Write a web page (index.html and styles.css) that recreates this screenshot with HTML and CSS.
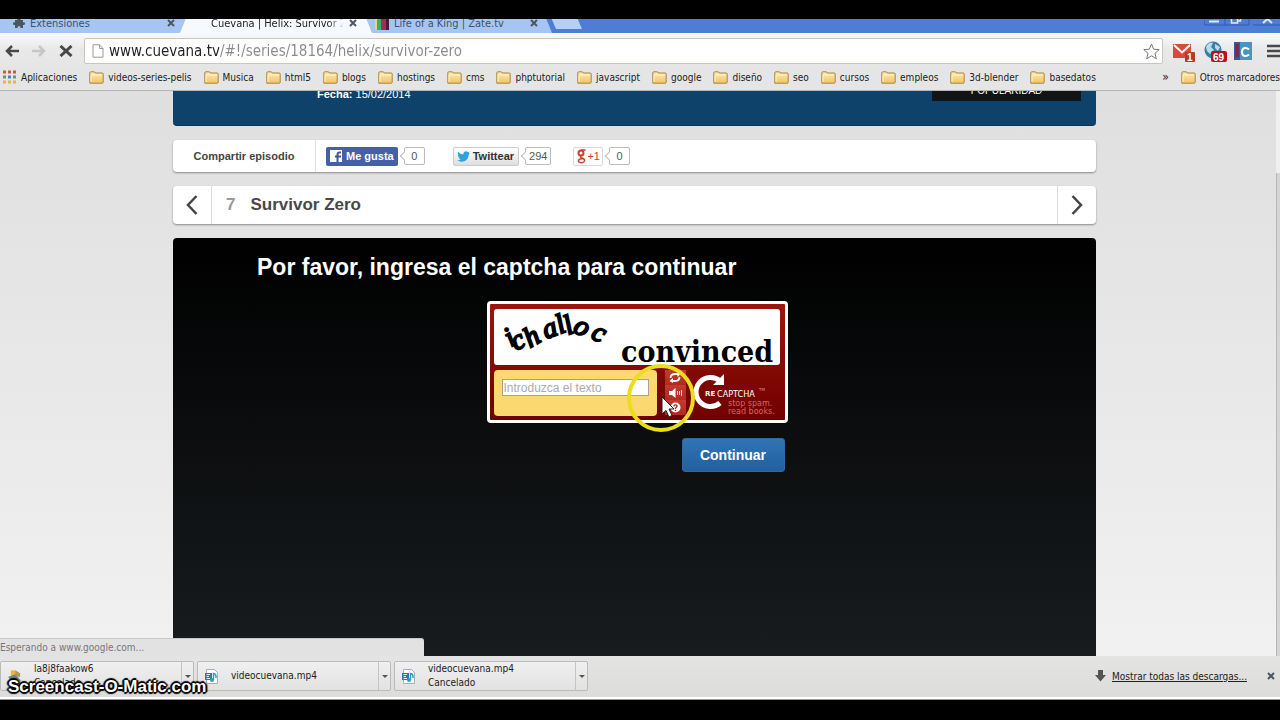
FILE: index.html
```html
<!DOCTYPE html>
<html lang="es">
<head>
  <meta charset="UTF-8">
  <meta name="viewport" content="width=device-width, initial-scale=1.0">
  <title>Cuevana | Helix: Survivor Zero</title>
  <link rel="stylesheet" href="styles.css">
</head>
<body>
  <svg width="0" height="0" class="defs" aria-hidden="true">
    <defs>
      <linearGradient id="fold" x1="0" y1="0" x2="0" y2="1">
        <stop offset="0" stop-color="#fdeab0"/><stop offset="1" stop-color="#f3c565"/>
      </linearGradient>
      <symbol id="folder" viewBox="0 0 15 13">
        <path d="M.8 12.2V1.8Q.8.8 1.8.8H5Q6 .8 6.3 2H13Q14.2 2 14.2 3V11.2Q14.2 12.2 13.2 12.2Z" fill="url(#fold)" stroke="#a8843e"/>
        <path d="M2 11V4H13" fill="none" stroke="#fff3cc"/>
      </symbol>
      <symbol id="media" viewBox="0 0 14 15">
        <path d="M1.5.5H9.5L12.5 3.5V14.5H1.5Z" fill="#fff" stroke="#9db2c4"/>
        <path d="M0 4H7V11H0Z" fill="#2f78a8"/>
        <path d="M1.5 5.5H5M1.5 7.5H4M1.5 9.5H5" stroke="#d8f0fa"/>
        <path d="M8.5 11V4.5Q11.5 5 11 9" fill="none" stroke="#2b9cc0" stroke-width="1.5"/>
        <circle cx="7" cy="11" r="2" fill="#2b9cc0"/>
      </symbol>
    </defs>
  </svg>

  <!-- Pestañas -->
  <div class="tabs">
    <div class="tab tab-first">
      <svg width="12" height="12" viewBox="0 0 12 12"><path d="M2 3H4.5Q3.5 0 6 0T7.5 3H10V5.5Q12 4.5 12 6.5T10 8V11H7.5Q7.5 9 6 9T4.5 11H2V8Q0 8.5 0 6.5T2 5.5Z" fill="#4a5666"/></svg>
      <span class="tab-title">Extensiones</span>
      <button class="tab-close" aria-label="Cerrar"><svg width="8" height="8" viewBox="0 0 8 8"><path d="M1 1L7 7M7 1L1 7"/></svg></button>
    </div>
    <div class="tab tab-active">
      <span class="tab-title fade">Cuevana | Helix: Survivor Zero</span>
      <button class="tab-close" aria-label="Cerrar"><svg width="8" height="8" viewBox="0 0 8 8"><path d="M1 1L7 7M7 1L1 7"/></svg></button>
    </div>
    <div class="tab tab-last">
      <span class="bars"></span>
      <span class="tab-title">Life of a King | Zate.tv</span>
      <button class="tab-close" aria-label="Cerrar"><svg width="8" height="8" viewBox="0 0 8 8"><path d="M1 1L7 7M7 1L1 7"/></svg></button>
    </div>
    <button class="new-tab" aria-label="Nueva"></button>
    <svg class="win" width="76" height="8" viewBox="0 0 76 8">
      <path d="M0 0V4Q0 6 2 6H16Q19 6 21 6V0M21 6H45V0M49 6H76" fill="none" stroke="#2c5cb4"/>
      <path d="M5 2.5H15" stroke="#dfe9fb" stroke-width="2"/>
      <path d="M27.5 0V4H33.5V0M34 2H36.5V0" fill="none" stroke="#dfe9fb" stroke-width="1.5"/>
      <path d="M59 4L63.5 0L68 4" fill="none" stroke="#dfe9fb" stroke-width="2"/>
    </svg>
  </div>

  <!-- Barra de direcciones -->
  <div class="toolbar">
    <button class="nav" aria-label="Atrás"><svg width="14" height="12" viewBox="0 0 14 12"><path d="M7 1L2 6L7 11M2 6H14" fill="none" stroke="#484848" stroke-width="2.5"/></svg></button>
    <button class="nav" aria-label="Adelante"><svg width="14" height="12" viewBox="0 0 14 12"><path d="M7 1L12 6L7 11M12 6H0" fill="none" stroke="#c6c6c6" stroke-width="2.5"/></svg></button>
    <button class="nav" aria-label="Detener"><svg width="14" height="12" viewBox="0 0 14 12"><path d="M1.5 1L12.5 11M12.5 1L1.5 11" fill="none" stroke="#484848" stroke-width="3"/></svg></button>
    <div class="omnibox">
      <svg width="12" height="14" viewBox="0 0 12 14"><path d="M1 .8H7.5L11 4.5V13.2H1ZM7.5 .8V4.5H11" fill="#fff" stroke="#999"/></svg>
      <input class="url" type="text" aria-label="Dirección" value="www.cuevana.tv/#!/series/18164/helix/survivor-zero">
      <svg width="17" height="17" viewBox="0 0 17 17"><path d="M8.5 1L10.7 6.2L16.2 6.6L12 10.3L13.3 15.8L8.5 12.8L3.7 15.8L5 10.3L.8 6.6L6.3 6.2Z" fill="#fff" stroke="#777"/></svg>
    </div>
    <div class="exts">
      <svg width="24" height="21" viewBox="0 0 24 21"><path d="M1 3H19V17H1Z" fill="#d8483c"/><path d="M2 4L10 11.5L18 4" fill="none" stroke="#fff" stroke-width="2"/><rect x="13" y="11" width="10" height="10" rx="1" fill="#b8382c"/><text x="15" y="20" class="badge">1</text></svg>
      <svg width="24" height="21" viewBox="0 0 24 21"><circle cx="10" cy="9" r="8.5" fill="#3d7ea6"/><path d="M3 6Q6 0 10 2L8 6L11 9L7 13L4 10ZM12 3L17 6L15 10L12 7Z" fill="#b9dceb"/><rect x="8" y="10" width="16" height="11" rx="2" fill="#b3141c"/><text x="10" y="20" class="badge">69</text></svg>
      <svg width="18" height="18" viewBox="0 0 18 18"><path d="M0 0H18V18H0Z" fill="#4a94bd"/><path d="M0 0H6V18H0Z" fill="#35579b"/><path d="M3 2V15" stroke="#8b1f3d" stroke-width="3"/><path d="M15 7.5Q13.5 6 11.5 6Q8 6 8 10T11.5 14Q13.5 14 15 12.5" fill="none" stroke="#fff" stroke-width="2"/></svg>
      <svg class="menu" width="16" height="14" viewBox="0 0 16 14"><path d="M0 2H16M0 7H16M0 12H16" stroke="#484848" stroke-width="2.5"/></svg>
    </div>
  </div>

  <!-- Marcadores -->
  <nav class="bookmarks">
    <a class="mark apps" href="#"><svg width="14" height="14" viewBox="0 0 14 14"><path d="M0 2H3M5 2H8M10 2H13" stroke="#d0553f" stroke-width="3"/><path d="M0 7H3M10 7H13" stroke="#55a36b" stroke-width="3"/><path d="M5 7H8" stroke="#4a7fd0" stroke-width="3"/><path d="M0 12H3M5 12H8M10 12H13" stroke="#e5b54a" stroke-width="3"/></svg>Aplicaciones</a>
    <a class="mark" href="#"><svg width="15" height="13"><use href="#folder"/></svg>videos-series-pelis</a>
    <a class="mark" href="#"><svg width="15" height="13"><use href="#folder"/></svg>Musica</a>
    <a class="mark" href="#"><svg width="15" height="13"><use href="#folder"/></svg>html5</a>
    <a class="mark" href="#"><svg width="15" height="13"><use href="#folder"/></svg>blogs</a>
    <a class="mark" href="#"><svg width="15" height="13"><use href="#folder"/></svg>hostings</a>
    <a class="mark" href="#"><svg width="15" height="13"><use href="#folder"/></svg>cms</a>
    <a class="mark" href="#"><svg width="15" height="13"><use href="#folder"/></svg>phptutorial</a>
    <a class="mark" href="#"><svg width="15" height="13"><use href="#folder"/></svg>javascript</a>
    <a class="mark" href="#"><svg width="15" height="13"><use href="#folder"/></svg>google</a>
    <a class="mark" href="#"><svg width="15" height="13"><use href="#folder"/></svg>diseño</a>
    <a class="mark" href="#"><svg width="15" height="13"><use href="#folder"/></svg>seo</a>
    <a class="mark" href="#"><svg width="15" height="13"><use href="#folder"/></svg>cursos</a>
    <a class="mark" href="#"><svg width="15" height="13"><use href="#folder"/></svg>empleos</a>
    <a class="mark" href="#"><svg width="15" height="13"><use href="#folder"/></svg>3d-blender</a>
    <a class="mark" href="#"><svg width="15" height="13"><use href="#folder"/></svg>basedatos</a>
    <span class="more">»</span>
    <a class="mark" href="#"><svg width="15" height="13"><use href="#folder"/></svg>Otros marcadores</a>
  </nav>

  <!-- Página -->
  <div class="view">
    <main class="page">
      <div class="content">
        <header class="hero">
          <p class="date"><b>Fecha:</b> 15/02/2014</p>
          <span class="popular">POPULARIDAD</span>
        </header>

        <section class="card share">
          <span class="share-label">Compartir episodio</span>
          <div class="social">
            <button class="fb"><svg width="12" height="12" viewBox="0 0 12 12"><path d="M0 0H12V12H0Z" fill="#fff"/><path d="M7.5 12V4.5Q7.5 2.5 9.5 2.5H11M5 6.5H11" fill="none" stroke="#3b5998" stroke-width="2"/></svg>Me gusta</button>
            <span class="count">0</span>
          </div>
          <div class="social">
            <button class="tw"><svg width="13" height="11" viewBox="0 0 13 11"><path d="M0 9.5Q2.5 9.5 3.8 8.3Q2 8 1.5 6.5H2.7Q.8 5.7.7 3.8L1.8 4.2Q.3 2.8 1 .8Q3.2 3.4 6.4 3.5Q6 .6 8.8.3Q10.2.3 11 1.2L12.7.6L11.6 2.2L13 1.9L11.8 3.2Q11.6 8 8 9.9Q4 11.6 0 9.5Z" fill="#2ba3dc"/></svg>Twittear</button>
            <span class="count">294</span>
          </div>
          <div class="social">
            <button class="gp"><svg width="9" height="15" viewBox="0 0 9 15"><circle cx="4" cy="4" r="2.5" fill="none" stroke="#c8402c" stroke-width="2"/><path d="M4 1H8.5M5 6Q2 8 5 9Q8 10 7.5 12Q6.5 14 4 13.7Q1 13.5 1.5 11.5Q2 9.8 5.5 9.8" fill="none" stroke="#c8402c" stroke-width="1.5"/></svg>+1</button>
            <span class="count">0</span>
          </div>
        </section>

        <section class="card episode">
          <button class="arrow prev" aria-label="Anterior"><svg width="12" height="20" viewBox="0 0 12 20"><path d="M10.5 1L2 10L10.5 19"/></svg></button>
          <h2 class="title"><span class="number">7</span>Survivor Zero</h2>
          <button class="arrow next" aria-label="Siguiente"><svg width="12" height="20" viewBox="0 0 12 20"><path d="M1.5 1L10 10L1.5 19"/></svg></button>
        </section>

        <section class="player">
          <h1>Por favor, ingresa el captcha para continuar</h1>
          <form class="captcha-form">
            <div class="captcha">
              <svg class="words" width="286" height="56" viewBox="0 0 286 56">
                <text class="warped" x="17 22 36 52 66 74 78 96" y="38 42 39 30 25 26 22 29" rotate="-32 -28 -30 -20 -22 -22 28 24">ichalloc</text>
                <text class="slab" x="127" y="53">convinced</text>
              </svg>
              <div class="captcha-row">
                <div class="answer"><input type="text" aria-label="Introduzca el texto" placeholder="Introduzca el texto"></div>
                <div class="tools">
                  <button type="button" aria-label="Otra imagen"><svg width="12" height="11" viewBox="0 0 12 11"><path d="M1.5 6Q1.5 2 6 2H9M10.5 5Q10.5 9 6 9H3" fill="none" stroke="#fff" stroke-width="1.8"/><path d="M8 0L11.5 2L8.5 5ZM4 6L.5 9L4 11Z" fill="#fff"/></svg></button>
                  <button type="button" aria-label="Audio"><svg width="13" height="10" viewBox="0 0 13 10"><path d="M0 3H3L6.5 0V10L3 7H0Z" fill="#fff"/><path d="M8.5 3V7M10.5 3V7M12.5 2V8" stroke="#fbd2cb"/></svg></button>
                  <button type="button" aria-label="Ayuda"><svg width="11" height="11" viewBox="0 0 11 11"><circle cx="5.5" cy="5.5" r="5" fill="#fff"/><path d="M4 4.5Q4 2.8 5.5 2.8T7 4.3Q7 5.2 5.5 6V7M5.5 7.8V9" fill="none" stroke="#b02418" stroke-width="1.3"/></svg></button>
                </div>
                <svg class="logo" width="88" height="46" viewBox="0 0 88 46">
                  <path d="M26 11A14.5 14.5 0 1 0 26 33" fill="none" stroke="#fff" stroke-width="5"/>
                  <path d="M19 15H30V4Z" fill="#fff"/>
                  <text x="11" y="26" class="re">RE</text>
                  <text x="23" y="27" class="cap">CAPTCHA</text>
                  <text x="65" y="21" class="tm">TM</text>
                  <text x="34" y="36" class="slogan">stop spam.</text>
                  <text x="34" y="44" class="slogan">read books.</text>
                </svg>
              </div>
              <svg class="pointer" width="68" height="70" viewBox="0 0 68 70">
                <circle cx="34" cy="35" r="32" fill="none" stroke="#eadd1c" stroke-width="4"/>
                <path d="M35 34V51L39 47.5L42 54L45 52.5L42 46H47Z" fill="#fff" stroke="#222"/>
              </svg>
            </div>
            <button type="button" class="send">Continuar</button>
          </form>
        </section>
      </div>
    </main>
    <div class="scroll"></div>
    <div class="status">Esperando a www.google.com...</div>
  </div>

  <!-- Descargas -->
  <footer class="shelf">
    <div class="download">
      <svg width="14" height="16" viewBox="0 0 15 16"><path d="M3 2H9V9H3Z" fill="#e8b535"/><path d="M0 9L8 6L14 13L6 15Z" fill="#6b8094"/><path d="M8 2L13 5V9L8 8Z" fill="#b09a45"/></svg>
      <div class="file"><span>la8j8faakow6</span><span>Cancelado</span></div>
      <button class="drop" aria-label="Opciones"></button>
    </div>
    <div class="download">
      <svg width="14" height="15"><use href="#media"/></svg>
      <div class="file"><span>videocuevana.mp4</span></div>
      <button class="drop" aria-label="Opciones"></button>
    </div>
    <div class="download">
      <svg width="14" height="15"><use href="#media"/></svg>
      <div class="file"><span>videocuevana.mp4</span><span>Cancelado</span></div>
      <button class="drop" aria-label="Opciones"></button>
    </div>
    <a class="all" href="#"><svg width="11" height="12" viewBox="0 0 11 12"><path d="M3 0H8V5H11L5.5 11.5L0 5H3Z" fill="#555"/></svg><span>Mostrar todas las descargas...</span></a>
    <button class="tab-close" aria-label="Cerrar"><svg width="8" height="8" viewBox="0 0 8 8"><path d="M1 1L7 7M7 1L1 7"/></svg></button>
    <div class="watermark">Screencast-O-Matic.com</div>
  </footer>
</body>
</html>
```
FILE: styles.css
```css
* {
  box-sizing: border-box;
}

body {
  margin: 0;
  padding: 19px 0 20px;
  height: 100vh;
  display: flex;
  flex-direction: column;
  overflow: hidden;
  background: #000;
  font-family: "DejaVu Sans Condensed", "Noto Sans", sans-serif;
  font-size: 10px;
  color: #222;
}

button {
  margin: 0;
  padding: 0;
  border: 0;
  background: none;
  font-family: inherit;
  cursor: pointer;
}

a {
  color: inherit;
  text-decoration: none;
}

svg {
  flex: none;
  display: block;
}

.defs {
  position: absolute;
}

/* Pestañas */
.tabs {
  flex: none;
  height: 14px;
  display: flex;
  align-items: flex-end;
  overflow: hidden;
  background: linear-gradient(#4a7ddb, #4f7fce);
}

.tab {
  height: 20px;
  display: flex;
  align-items: center;
  gap: 5px;
  background: #a5c6f2;
  color: #42506a;
  font-size: 11px;
  white-space: nowrap;
}

.tab-first {
  width: 188px;
  padding: 0 13px;
}

.tab-active {
  width: 192px;
  margin-left: -8px;
  padding: 0 15px 0 31px;
  background: #f6f9fd;
  color: #222;
  clip-path: polygon(8px 0, calc(100% - 8px) 0, 100% 100%, 0 100%);
  z-index: 1;
}

.tab-last {
  width: 190px;
  margin-left: -10px;
  padding: 0 14px 0 13px;
  clip-path: polygon(0 0, calc(100% - 8px) 0, 100% 100%, 0 100%);
}

.tab-title {
  flex: 1;
  overflow: hidden;
}

.fade {
  -webkit-mask-image: linear-gradient(90deg, #000 88%, transparent);
  mask-image: linear-gradient(90deg, #000 88%, transparent);
}

.tab-close svg {
  fill: none;
  stroke: #4c5563;
  stroke-width: 2;
}

.bars {
  width: 14px;
  height: 14px;
  background: linear-gradient(90deg, #d8e070 2px, #35b558 2px 6px, #a02c58 6px 11px, #4a1c38 11px);
}

.new-tab {
  width: 32px;
  height: 14px;
  margin: 0 0 4px -2px;
  background: #b4d0f6;
  clip-path: polygon(0 0, 26px 0, 100% 100%, 6px 100%);
}

.win {
  margin: 0 0 6px auto;
}

/* Barra de direcciones */
.toolbar {
  flex: none;
  height: 33px;
  padding: 5px 0 2px 5px;
  display: flex;
  align-items: center;
  background: linear-gradient(#f8fafd, #e9e9e9 16px, #e6e6e6);
}

.nav {
  width: 14px;
  margin-right: 13px;
}

.omnibox {
  flex: 1;
  height: 26px;
  margin-left: -2px;
  padding: 0 2px 0 7px;
  display: flex;
  align-items: center;
  gap: 5px;
  background: #fff;
  border: 1px solid #c9c6bd;
  border-radius: 2px;
}

.url {
  flex: 1;
  min-width: 0;
  padding: 0;
  border: 0;
  outline: 0;
  font-family: "DejaVu Sans Condensed", sans-serif;
  font-size: 15px;
  color: transparent;
  background: linear-gradient(90deg, #222 110px, #8a8a8a 110px);
  -webkit-background-clip: text;
  background-clip: text;
}

.exts {
  flex: none;
  width: 117px;
  padding-left: 9px;
  display: flex;
  align-items: center;
  gap: 7px;
  overflow: hidden;
}

.menu {
  margin-left: 8px;
}

.badge {
  font: bold 10px "Liberation Sans", sans-serif;
  fill: #fff;
}

/* Marcadores */
.bookmarks {
  flex: none;
  height: 25px;
  padding: 0 0 2px 3px;
  display: flex;
  align-items: center;
  gap: 12px;
  overflow: hidden;
  white-space: nowrap;
  background: #e5e5e5;
  border-bottom: 1px solid #b5b5b5;
}

.mark {
  display: flex;
  align-items: center;
  gap: 4px;
}

.more {
  margin-left: auto;
  font-size: 12px;
}

/* Página */
.view {
  flex: 1;
  min-height: 0;
  display: flex;
  position: relative;
  background: #f0f0f0;
}

.page {
  flex: 1;
  min-width: 0;
  padding-right: 7px;
  overflow: hidden;
  display: flex;
  justify-content: center;
  background: linear-gradient(#dfdfdf, #f1f1f1);
  font-family: "Liberation Sans", Arial, sans-serif;
}

.content {
  width: 923px;
  margin-top: -40px;
  display: flex;
  flex-direction: column;
}

.scroll {
  width: 4px;
  margin-top: 82px;
  background: #d5d5d5;
  border-left: 1px solid #b8b8b8;
}

.hero {
  flex: none;
  height: 75px;
  padding: 0 15px 24px 144px;
  display: flex;
  justify-content: space-between;
  align-items: flex-end;
  background: #0e426b;
  border-bottom: 1px solid #0a3355;
  border-radius: 0 0 4px 4px;
  color: #fff;
}

.date {
  margin: 0;
  font-size: 11px;
  line-height: 14px;
}

.popular {
  width: 149px;
  height: 30px;
  padding-top: 14px;
  background: #111417;
  font-size: 10px;
  line-height: 12px;
  text-align: center;
}

.card {
  flex: none;
  display: flex;
  align-items: center;
  margin-top: 14px;
  background: #fff;
  border-radius: 4px;
  box-shadow: 0 1px 2px rgba(0, 0, 0, 0.4);
}

.share {
  height: 32px;
}

.share-label {
  width: 143px;
  font-size: 11px;
  font-weight: bold;
  line-height: 32px;
  text-align: center;
  color: #444;
  border-right: 1px solid #e5e5e5;
}

.social {
  display: flex;
  align-items: center;
  gap: 6px;
  margin-left: 10px;
}

.social + .social {
  margin-left: 28px;
}

.social + .social + .social {
  margin-left: 22px;
}

.social button {
  height: 19px;
  padding: 0 4px;
  display: flex;
  align-items: center;
  gap: 3px;
  border-radius: 2px;
  font-size: 11px;
  font-weight: bold;
}

.social .fb {
  background: #4560a5;
  color: #fff;
  gap: 4px;
}

.social .tw {
  border: 1px solid #ccc;
  padding: 0 4px 0 3px;
  background: linear-gradient(#fff, #dedede);
  color: #333;
}

.social .gp {
  border: 1px solid #d9d9d9;
  padding: 0 2px 0 3px;
  color: #c8402c;
  gap: 1px;
  font-weight: normal;
}

.count {
  min-width: 21px;
  height: 18px;
  padding: 0 3px;
  position: relative;
  border: 1px solid #bbb;
  border-radius: 2px;
  background: #fff;
  font-size: 11px;
  line-height: 16px;
  text-align: center;
  color: #555;
}

/* Flecha del contador */
.count::before {
  content: "";
  position: absolute;
  left: -4px;
  top: 5px;
  width: 5px;
  height: 5px;
  background: #fff;
  border-left: 1px solid #bbb;
  border-bottom: 1px solid #bbb;
  transform: rotate(45deg);
}

.episode {
  height: 38px;
}

.arrow {
  width: 39px;
  height: 38px;
  display: flex;
  align-items: center;
  justify-content: center;
}

.arrow svg {
  fill: none;
  stroke: #444;
  stroke-width: 2.5;
}

.prev {
  border-right: 1px solid #ddd;
}

.next {
  border-left: 1px solid #ddd;
}

.title {
  flex: 1;
  margin: 0;
  padding-left: 14px;
  display: flex;
  gap: 15px;
  font-size: 17px;
  color: #484848;
}

.number {
  color: #999;
}

.player {
  flex: 1;
  margin-top: 14px;
  padding: 15px 79px 0 84px;
  background: linear-gradient(#000, #181c1f);
  border-radius: 4px 4px 0 0;
}

.player h1 {
  margin: 0;
  font-size: 23px;
  line-height: 28px;
  color: #fff;
  white-space: nowrap;
}

.captcha-form {
  width: 301px;
  margin: 20px auto 0;
  display: flex;
  flex-direction: column;
}

.captcha {
  position: relative;
  height: 122px;
  padding: 5px;
  background: linear-gradient(#9b170c, #700000);
  border: 3px solid #fff;
  border-radius: 4px;
}

.words {
  display: block;
  margin-left: -1px;
  background: #fff;
  border-radius: 3px;
}

.warped {
  font: italic 28px "Liberation Serif", serif;
  stroke: #000;
  stroke-width: 2;
}

.slab {
  font: bold 30px "DejaVu Serif Condensed", "DejaVu Serif", serif;
}

.captcha-row {
  display: flex;
  margin: 5px 0 0 -1px;
}

.answer {
  flex: none;
  width: 163px;
  height: 46px;
  padding: 9px 8px;
  background: #fbd870;
  border-radius: 4px;
}

.answer input {
  display: block;
  width: 147px;
  height: 17px;
  padding: 0 1px;
  border: 1px solid #a8a48c;
  background: #fff;
  font-family: "Liberation Sans", Arial, sans-serif;
  font-size: 12px;
}

.answer input::placeholder {
  color: #aaa;
}

.tools {
  flex: none;
  width: 21px;
  margin-left: 8px;
  display: flex;
  flex-direction: column;
}

.tools button {
  height: 15px;
  display: flex;
  align-items: center;
  justify-content: center;
  background: linear-gradient(#c23b2e, #b02a1f);
}

.logo {
  margin-left: 8px;
}

.re {
  font: bold 7px "DejaVu Sans", sans-serif;
  fill: #fff;
}

.cap {
  font: 9px "DejaVu Sans Condensed", sans-serif;
  fill: #fff;
}

.tm {
  font: 4px "DejaVu Sans", sans-serif;
  fill: #e58b80;
}

.slogan {
  font: 8px "DejaVu Sans", sans-serif;
  fill: #d8665a;
}

.pointer {
  position: absolute;
  left: 137px;
  top: 59px;
}

.send {
  align-self: flex-end;
  width: 103px;
  height: 34px;
  margin: 15px 3px 0 0;
  background: linear-gradient(#3075b5, #235f9f);
  border: 1px solid #2b68a5;
  border-radius: 3px;
  color: #fff;
  font-size: 14px;
  font-weight: bold;
}

.status {
  position: absolute;
  left: 0;
  bottom: 0;
  width: 424px;
  height: 18px;
  background: #e2e2e2;
  border-top: 1px solid #c8c8c8;
  border-radius: 0 3px 0 0;
  font-size: 10px;
  line-height: 17px;
  color: #777;
}

/* Descargas */
.shelf {
  flex: none;
  position: relative;
  height: 44px;
  padding: 5px 5px 9px 0;
  display: flex;
  align-items: center;
  gap: 3px;
  background: linear-gradient(#e4e4e4, #dcdcda 41px, #fff 41px 43px, #999 43px);
  white-space: nowrap;
}

.download {
  width: 194px;
  height: 30px;
  padding-left: 7px;
  display: flex;
  align-items: center;
  background: linear-gradient(#f0f0f0, #e2e2e2);
  border: 1px solid #bbb;
  border-radius: 2px;
}

.file {
  flex: 1;
  padding-left: 12px;
  display: flex;
  flex-direction: column;
  font-size: 10px;
  line-height: 14px;
}

.drop {
  width: 12px;
  height: 28px;
  border-left: 1px solid #c4c4c4;
}

.drop::before {
  content: "";
  display: block;
  width: 0;
  margin: 0 auto;
  border: 3px solid transparent;
  border-top-color: #555;
  border-bottom: 0;
}

.all {
  margin: 0 17px 0 auto;
  display: flex;
  align-items: center;
  gap: 6px;
  font-size: 10px;
}

.all span {
  text-decoration: underline;
}

.watermark {
  position: absolute;
  left: 8px;
  top: 21px;
  font: bold 17px/20px "Liberation Sans", Arial, sans-serif;
  color: #fff;
  text-shadow: -2px 0 1px #000, 2px 0 1px #000, 0 -2px 1px #000, 0 2px 1px #000, 1px 1px 1px #000, -1px -1px 1px #000;
}
```
